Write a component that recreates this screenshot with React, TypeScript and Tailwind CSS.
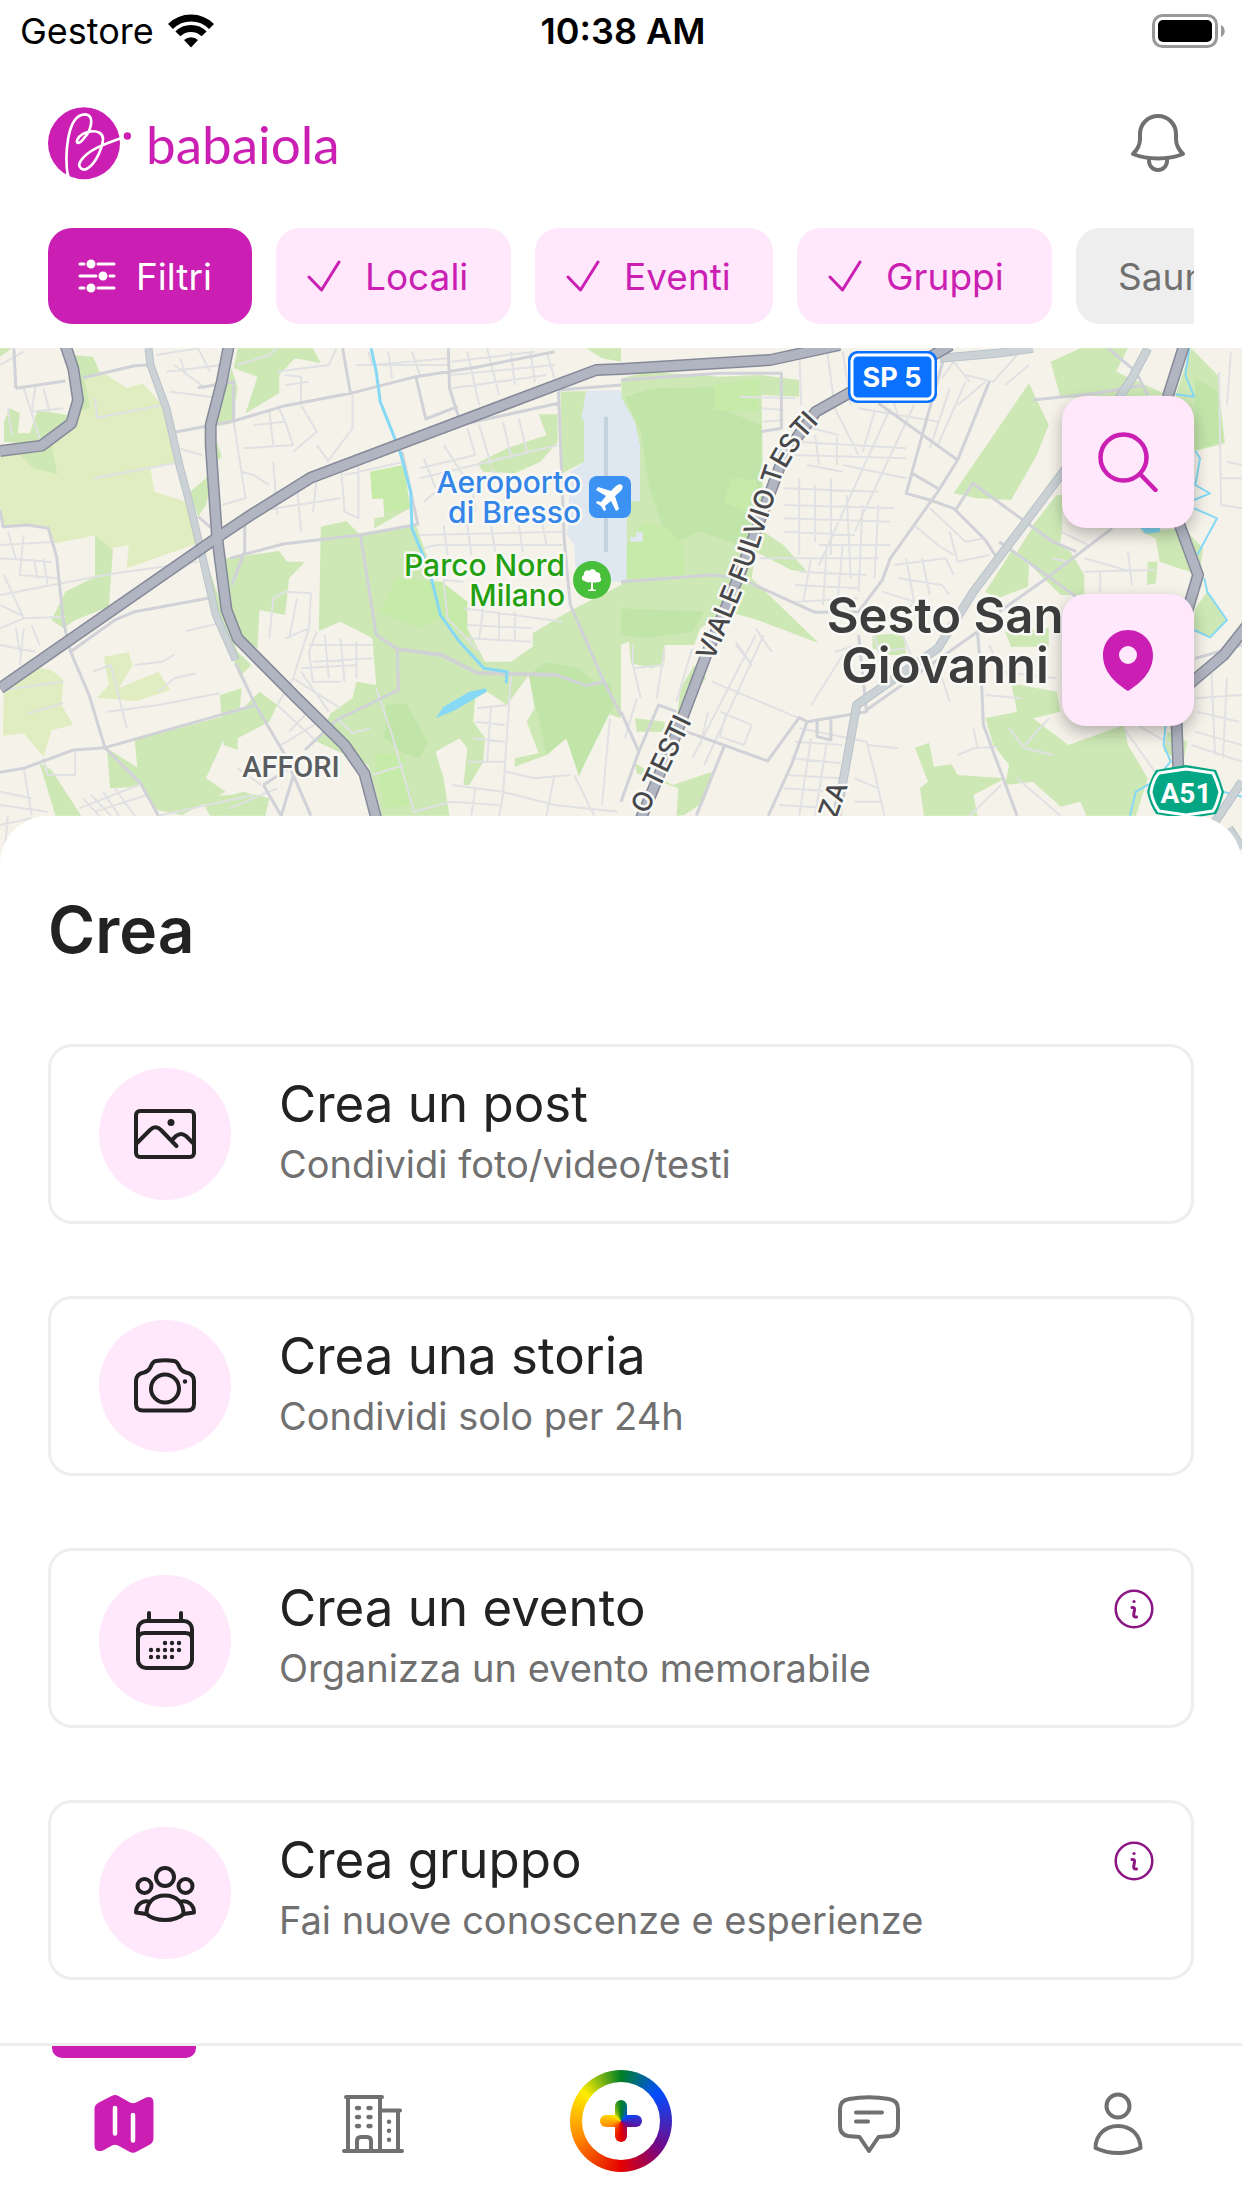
import type { ReactNode } from "react";

const RAINBOW =
  "bg-[conic-gradient(#008026_0deg,#004dff_52deg,#750787_125deg,#e40000_180deg,#ff8c00_250deg,#ffed00_308deg,#008026_360deg)]";

function StatusBar() {
  return (
    <div className="grid h-[62px] grid-cols-3 items-center pr-4 pl-5 text-black">
      <div className="flex items-center gap-3.5 text-[36px] leading-none">
        <span>Gestore</span>
        <svg width="46" height="34" viewBox="0 0 46 34" fill="none" stroke="#000" strokeWidth="7" aria-label="Wi-Fi">
          <path d="M2.5 12.5a29 29 0 0 1 41 0" />
          <path d="M9.9 19.9a18.5 18.5 0 0 1 26.2 0" />
          <path d="M23 33.5 16 26a10 10 0 0 1 14 0Z" fill="#000" stroke="none" />
        </svg>
      </div>
      <time className="text-center text-[36px] leading-none font-semibold">10:38 AM</time>
      <svg className="justify-self-end" width="74" height="34" viewBox="0 0 74 34" aria-label="Batteria carica">
        <rect x="1.5" y="1.5" width="63" height="31" rx="9" fill="none" stroke="#999" strokeWidth="3" />
        <rect x="6" y="6" width="54" height="22" rx="5" fill="#000" />
        <path d="M69 11c5 2 5 10 0 12Z" fill="#999" />
      </svg>
    </div>
  );
}

function Logo() {
  return (
    <a href="#home" className="flex items-center gap-3.5 text-[#ca1fb2]">
      <svg width="84" height="73" viewBox="24 38 252 219" fill="none" aria-hidden="true">
        <circle cx="132" cy="147" r="108" fill="#ca1fb2" />
        <g stroke="#fff" strokeWidth="8" strokeLinecap="round" strokeLinejoin="round">
          <path d="M84 250C74 190 78 60 136 60C168 64 150 112 134 129C120 150 106 150 112 136C124 108 188 98 189 134C187 162 168 204 146 220C128 234 110 218 122 200C142 168 190 150 245 131" />
          <path d="M84 240l2 16" />
        </g>
        <circle cx="262" cy="125" r="11" fill="#ca1fb2" />
      </svg>
      <span className="text-[53px] leading-none [font-family:Lato,sans-serif]">babaiola</span>
    </a>
  );
}

function BellIcon() {
  return (
    <svg width="60" height="64" viewBox="0 0 60 64" fill="none" stroke="#707070" strokeWidth="4" strokeLinejoin="round">
      <path d="M30 5C20 5 12 13 12 23V28C12 33 9 39 5 43C20 49 40 49 55 43C51 39 48 33 48 28V23C48 13 40 5 30 5Z" />
      <path d="M21 48v2a9 9 0 0 0 18 0v-2" />
    </svg>
  );
}

function Check() {
  return (
    <svg width="34" height="34" viewBox="0 0 34 34" fill="none" stroke="currentColor" strokeWidth="3" strokeLinecap="round" strokeLinejoin="round">
      <path d="M2 18 14.500 31 32 3" />
    </svg>
  );
}

const chips = [
  { label: "Locali", width: "w-[235px]" },
  { label: "Eventi", width: "w-[238px]" },
  { label: "Gruppi", width: "w-[255px]" },
];

function Filters() {
  return (
    <div className="mx-12 mt-12 mb-6 flex gap-6 overflow-hidden text-[37px] leading-none">
      <button type="button" className="flex h-24 w-[204px] shrink-0 items-center gap-5 rounded-3xl bg-[#ca1fb2] pl-[30px] text-white">
        <svg width="38" height="36" viewBox="-1 -1 38 36" fill="#fff" stroke="#fff" strokeWidth="3" strokeLinecap="round">
          <path d="M1 5h4M19 5h16M1 17h16M31 17h4M1 29h4M19 29h16" />
          <circle cx="12" cy="5" r="3" />
          <circle cx="24" cy="17" r="3" />
          <circle cx="12" cy="29" r="3" />
        </svg>
        Filtri
      </button>
      {chips.map((c) => (
        <button
          key={c.label}
          type="button"
          aria-pressed="true"
          className={`flex h-24 shrink-0 items-center gap-6 rounded-3xl bg-[#ffe7fc] pl-[31px] text-[#ca1fb2] ${c.width}`}
        >
          <Check />
          {c.label}
        </button>
      ))}
      <button type="button" aria-pressed="false" className="h-24 shrink-0 rounded-3xl bg-[#eee] px-[42px] text-[#707070]">
        Saune
      </button>
    </div>
  );
}

const LEFT_YELLOW = [
  "M180 90L270 90L320 130L360 115L410 180L440 290L440 355L380 370L390 440L470 470L500 595L320 670L325 600L255 615L245 570L140 595L120 550L70 540L8 545L0 480L0 335L110 315L190 240Z",
  "M262 935L325 922L335 960L300 1030L400 980L430 1035L345 1068L245 1058L275 1020Z",
  "M10 1005L100 970L130 975L160 1005L155 1080L185 1140L130 1155L110 1235L60 1165L8 1172Z",
];

const LEFT_GREEN = [
  "M185 30L235 35L255 90L212 100L228 190L205 195Z",
  "M25 190L50 205L45 265L75 265L95 195L170 210L190 240L110 300L10 290L10 230Z",
  "M50 330L130 300L145 388L85 370Z",
  "M600 10L790 10L810 55L745 40L705 90L705 145L620 205L650 95L590 70Z",
  "M585 70L600 130L585 235L540 245Z",
  "M545 280L560 335L545 350L520 480L500 515L480 440L520 400Z",
  "M240 570L285 615L275 785L190 825L160 850L130 825L165 740L240 695Z",
  "M570 640L705 618L725 650L770 650L730 700L720 810L655 795L650 910L600 880L580 780Z",
  "M530 680L600 920L635 960L605 995L545 800Z",
  "M810 545L875 528L905 565L1050 540L1080 640L1110 810L1180 850L1225 950L1290 950L1345 905L1345 865L1435 800L1568 720L1568 1120L1520 1100L1462 1295L1430 1180L1380 1230L1300 1265L1300 1240L1360 1225L1330 1130L1350 1090L1335 990L1280 1080L1230 1040L1200 1060L1195 1130L1225 1180L1220 1250L1185 1320L1170 1320L1180 1210L1160 1180L1100 1220L1120 1300L1135 1412L965 1412L930 1260L800 1190L835 1105L890 1060L900 1010L950 1020L940 880L860 830L805 858Z",
  "M935 380L1020 360L1035 490L945 550L945 520L970 515L968 460L940 462Z",
  "M1415 140L1480 138L1475 230L1475 350L1420 385Z",
  "M1360 208L1408 208L1408 290L1365 350L1300 385L1220 380L1205 355L1280 310L1380 270Z",
  "M340 1185L560 1115L570 1170L520 1300L570 1340L460 1410L395 1395L350 1310Z",
  "M555 1050L610 1030L605 1100L655 1040L700 1080L680 1130L600 1180L600 1215L565 1200Z",
  "M270 1210L350 1270L350 1325L278 1330Z",
  "M100 1255L130 1275L205 1412L140 1412Z",
  "M505 1355L585 1350L615 1340L680 1360L670 1412L530 1412Z",
  "M1480 10L1568 10L1568 50L1520 40Z",
  "M0 10L30 10L0 35Z",
];

const LEFT_BRIGHT = [
  "M935 380L1020 360L1035 490L970 500L968 460L940 462Z",
  "M945 1225L1020 1230L1035 1380L970 1390Z",
  "M1000 700L1115 710L1180 770L1180 880L1110 820L1060 850L960 800Z",
];

const LEFT_DEEP = [
  "M975 1080L1025 1075L1080 1190L1060 1240L1020 1225L970 1180Z",
  "M1335 990L1380 950L1460 970L1500 1010L1540 1010L1550 1080L1462 1290L1430 1180L1380 1230Z",
];

const LEFT_ROADS = [
  "M0 1282L60 1270L185 1215L265 1208L640 1082",
  "M265 1208L225 1050L178 920L290 825L340 800L525 760",
  "M178 920L160 830L143 635L122 550L70 540L8 545L0 495",
  "M265 1208L355 1315L400 1412",
  "M440 262L590 228L720 182L885 145L1050 95L1210 65L1400 20",
  "M590 228L590 110L500 128",
  "M885 145L865 10",
  "M1050 95L1075 222L1155 185M1132 10L1135 130L1158 215",
  "M580 640L715 597L910 570L1055 538L1015 320",
  "M910 570L950 870L1003 912L1115 930L1205 984L1405 990L1480 1022L1525 1010",
  "M1003 912L1006 1035L850 1125L770 1215",
  "M1410 140L1425 590L1440 780L1525 1010L1568 1110",
  "M1410 175L1160 240M1410 135L1568 120",
  "M595 955L645 1080L715 1220L785 1412",
  "M40 130L165 108M40 130L35 10M210 98L340 62L375 60",
  "M665 1320L750 1255L710 1412L665 1320",
  "M500 515L545 560M618 540L618 620L585 720",
];

const LEFT_LANES = [
  "M410 180L245 218L240 160M440 355L238 400M500 650L275 688L0 750",
  "M60 130L100 280M90 120L80 200L160 190M110 130L125 200M0 60L60 20M20 190L30 270",
  "M0 600L140 590M20 560L40 640M60 570L50 690L150 700M0 640L130 650M10 690L60 820L0 850M60 820L165 815M85 640L95 700M110 640L120 720M0 780L60 815",
  "M0 900L90 920M40 850L50 920M60 850L50 960M80 840L100 900M5 1035L160 1010M70 1105L160 1075",
  "M270 1100L400 1080L555 1045M235 980L280 960L320 1150M400 1040L440 1000L495 985M340 960L410 950L440 930M470 858L555 835",
  "M395 30L500 10M420 80L560 60M430 140L560 160M455 40L470 90M500 10L530 80M440 60L520 130M450 310L510 330",
  "M600 60L680 30L700 10M720 90L760 95L760 170M720 120L780 110M700 80L830 60L850 10",
  "M590 230L620 460L560 480M615 310L740 300L720 230M610 380L640 390L680 420M680 200L690 300M640 240L720 230L700 180M800 300L830 350M890 150L890 250L830 345M740 320L800 260L760 180",
  "M690 350L700 510M640 500L860 460M750 420L760 560M800 400L790 500M860 350L870 500L905 520L905 365M870 390L1020 350",
  "M680 880L690 760L720 740L785 745L780 850L720 880M750 760L730 880M780 850L740 1000L700 1080",
  "M800 860L780 920L790 1010L860 1010M820 870L830 1000M860 880L870 1010M780 900L940 900M790 950L940 940M900 890L900 1000M760 970L900 960M740 1000L860 1090M760 980L830 1100M700 1080L800 1190M730 1160L770 1110M710 1200L820 1120",
  "M930 20L940 60L1130 40M980 20L990 100M1040 20L1060 90M900 60L1130 60M1140 50L1350 20M1140 90L1400 60M1180 20L1210 180M1230 10L1260 150M1290 20L1300 120M1340 20L1350 110M1140 130L1380 90M1380 20L1400 100",
  "M1070 340L1100 430M1060 370L1200 330L1180 250M1120 300L1180 410M1210 240L1240 360M1270 230L1290 330M1310 220L1330 320M1060 400L1410 300M1070 470L1100 440M1240 370L1260 400",
  "M1060 570L1420 560M1070 610L1100 600L1420 600M1120 540L1130 630M1180 540L1190 630M1240 540L1250 620M1310 540L1320 620M1370 540L1380 600M1190 400L1200 500",
  "M1170 790L1420 830M1180 840L1345 850M1180 880L1340 890M1220 790L1210 880M1260 800L1260 890M1300 800L1300 890M1120 705L1130 820L1210 920M1170 710L1120 705",
  "M1290 990L1270 1350L1260 1412M1205 1090L1280 1080M1200 1130L1275 1140M1195 1180L1275 1190M1180 1250L1275 1250M1240 1080L1230 1250M1275 1280L1350 1300L1440 1290M1140 1320L1270 1340L1400 1380L1560 1400M1140 1370L1260 1380M1200 1330L1190 1412M1400 1290L1380 1412M1450 1290L1500 1412M1540 1120L1520 1380",
  "M210 1360L250 1412M230 1350L280 1412M260 1340L300 1412M290 1330L340 1412M200 1390L350 1320M240 1400L370 1350M0 1380L120 1400M0 1340L80 1360M60 1270L80 1412M110 1240L120 1290L190 1290L190 1220M0 1440L80 1420M20 1412L10 1540",
  "M950 1030L990 1170L1045 1400L1140 1370M940 1290L1020 1260M850 1120L890 1165L935 1150M400 1412L640 1350M600 1270L660 1320M580 1390L700 1330",
];

const RIGHT_GREEN = [
  "M1 100L70 80L250 95L350 90L450 105L450 155L355 150L360 560L410 600L470 680L430 675L340 620L330 700L500 895L345 825L270 800L200 850L185 900L110 900L110 950L80 970L25 955L20 890L0 900Z",
  "M185 960L215 1000L185 1045L140 1130L150 1030Z",
  "M1030 115L1080 240L1050 330L985 465L900 460L840 445Z",
  "M1085 50L1160 10L1280 10L1250 80L1380 150L1110 160Z",
  "M1440 10L1510 95L1510 140L1525 295L1450 318L1400 150Z",
  "M1100 450L1114 450L1114 560L1100 640L1040 540Z",
  "M985 620L1030 660L1028 725L950 760L920 740Z",
  "M1040 545L1135 620L1170 690L1170 750L1110 750L1000 620Z",
  "M1310 560L1420 550L1470 610L1460 690L1360 650L1350 580Z",
  "M1330 650L1355 650L1350 715L1328 720Z",
  "M1480 740L1530 825L1490 880L1445 850L1450 790Z",
  "M635 870L715 865L720 930L680 930L635 910Z",
  "M970 860L1080 850L1080 905L985 905Z",
  "M985 1015L1100 1040L1110 1100L1040 1120L1130 1200L1270 1140L1280 1200L1330 1300L1300 1412L1175 1412L1160 1370L1110 1385L1040 1310L970 1320L980 1260L940 1200L920 1120L1000 1100Z",
  "M742 1208L778 1193L790 1265L835 1258L850 1290L970 1300L890 1350L900 1412L765 1412L755 1330L775 1310Z",
  "M35 1120L110 1130L110 1160L40 1160Z",
  "M35 1255L130 1320L230 1280L210 1370L160 1410L140 1412L145 1330L40 1285Z",
  "M1380 1160L1430 1190L1420 1250L1370 1220Z",
];

const RIGHT_DEEP = [
  "M10 155L80 130L250 125L250 190L355 240L355 560L300 600L200 560L120 600L70 420L50 260Z",
  "M1450 100L1510 140L1520 290L1450 315Z",
  "M0 790L210 800L180 860L70 880L0 870Z",
];

const RIGHT_BRIGHT = [
  "M235 120L350 100L345 200L235 195Z",
  "M280 400L340 405L355 470L330 510L260 470Z",
  "M60 530L120 550L155 600L160 690L15 700L15 600Z",
];

const RIGHT_ROADS = [
  "M0 105L250 85L405 85L405 250L355 260",
  "M0 710L230 690L300 700L490 802L600 800L660 705L680 640L800 440L850 345L930 110",
  "M650 175L850 345M820 20L770 230L720 445L780 465L840 490L920 585L955 650",
  "M720 445L735 385L800 430",
  "M845 495L888 415L1090 590L1150 620M955 590L1080 695L1200 800",
  "M955 800L1080 695L1240 550",
  "M600 870L620 1100L470 1130L450 1118L370 1248L165 1160",
  "M470 1130L430 1260L372 1412M495 1130L495 1175L530 1185L530 1115",
  "M620 1095L900 860L910 1000L915 1140L965 1300L1000 1412",
  "M0 1100L45 1220L0 1370M45 1220L95 1080L140 1100M260 1205L190 1412",
  "M1040 165L1200 145L1320 120M1230 10L1300 80L1330 150",
  "M1450 940L1568 900",
];

const RIGHT_LANES = [
  "M450 20L455 180M520 15L540 190L600 330M560 20L580 180M355 190L410 195M360 230L410 225M300 155L440 160",
  "M680 190L500 660M740 180L590 560M720 60L780 160M830 130L780 310M870 110L800 300M920 110L850 180M660 80L700 210M640 200L610 320M600 190L800 230",
  "M450 240L550 270M440 290L720 310M430 330L720 340M470 360L560 380M560 360L720 400M490 270L500 360M545 275L545 360",
  "M410 430L650 440M410 480L690 490M410 520L680 530M410 560L590 570M500 600L680 600M450 400L450 630M490 420L490 590M530 400L530 630M570 450L580 700M610 480L600 740M650 480L640 700",
  "M350 640L650 640M450 680L620 690M440 720L600 730M480 640L460 770M520 600L510 780M560 600L545 790M440 770L600 760",
  "M780 490L870 590L920 580M740 540L800 600L840 630M690 660L820 640L840 690M700 700L810 720L830 750M720 640L740 770M760 640L780 750M830 560L850 650L930 630M660 740L740 770L700 830",
  "M810 100L840 50L880 110M870 90L940 110L1000 30M970 120L1030 60M1400 170L1310 250",
  "M30 900L30 960L50 1060M110 910L90 1060M180 910L140 1070M30 970L110 960M40 1060L10 1180M230 1010L450 1120",
  "M290 890L330 960L290 900M340 850L380 920M220 1100L200 1200M250 1100L330 1140L310 1200L250 1175L265 1105M340 870L180 1240M360 870L210 1260",
  "M440 1190L560 1200M430 1240L555 1255M420 1290L550 1300M410 1330L545 1340M400 1380L530 1390M480 1180L450 1412M520 1190L490 1412M450 1150L620 1190L640 1280L665 1412",
  "M540 920L600 900M480 1080L560 930M620 1200L700 1210M590 1300L650 1330M590 1370L655 1370",
  "M640 870L650 920L720 910M660 930L690 990M710 870L740 950M800 960L830 1070M760 940L800 970M930 900L960 980L1100 1000M920 1050L1010 1060M1080 1120L1020 1200",
  "M1170 640L1290 680M1170 680L1350 675M1280 620L1290 720M1210 680L1210 740M1110 560L1180 600L1130 650L1090 640",
  "M1510 80L1515 480L1568 490M1530 350L1568 360M1515 400L1568 400M1540 20L1530 180M1450 1060L1568 1050M1455 1100L1560 1130M1490 960L1500 1230M1530 1000L1520 1240M1450 1160L1568 1200M1440 1200L1568 1250M980 1150L1020 1210L1090 1230",
  "M850 1230L890 1210L950 1205M890 1150L900 1210M960 1320L880 1412M1000 1300L1110 1412M1270 1150L1360 1300M1290 1130L1390 1200",
];

function MapView() {
  return (
    <svg
      className="block h-[516px] w-full bg-[#f5f2ea] [&_path]:[vector-effect:non-scaling-stroke]"
      viewBox="0 0 1242 516"
      preserveAspectRatio="xMidYMid slice"
      role="img"
      aria-label="Mappa di Milano nord e Sesto San Giovanni"
      fill="none"
      strokeLinejoin="round"
    >
      <g transform="translate(0 -3) scale(.39605 .33333)">
        <path d={LEFT_YELLOW.join("")} fill="#e0edc0" />
        <path d={LEFT_GREEN.join("")} fill="#cde8b5" />
        <path d={LEFT_DEEP.join("")} fill="#c1e5a9" />
        <path d={LEFT_BRIGHT.join("")} fill="#c6eaa7" />
        <path d="M1480 138L1560 135L1600 160L1617 240L1617 470L1580 500L1582 710L1455 710L1450 600L1432 570L1440 380L1475 350L1475 230L1468 220Z" fill="#dfe7f1" />
      </g>
      <g transform="translate(621 -3) scale(.39605 .33333)">
        <path d={RIGHT_GREEN.join("")} fill="#cde8b5" />
        <path d={RIGHT_DEEP.join("")} fill="#c1e5a9" />
        <path d={RIGHT_BRIGHT.join("")} fill="#c6eaa7" />
        <path d="M0 155L35 230L48 300L48 468L15 470L14 705L-10 705L-40 160Z" fill="#dfe7f1" />
        <path d="M24 575L38 575L38 562L55 562L55 590L24 590Z" fill="#dfe7f1" />
        <path d={RIGHT_LANES.join("")} stroke="#e0e1e3" strokeWidth="2" />
        <path d={RIGHT_ROADS.join("")} stroke="#d0d2d8" strokeWidth="3" />
        <path d="M1435 10L1425 90L1447 155L1400 148M1450 318L1462 340L1450 420L1487 445L1447 465M1447 490L1505 520L1455 630M1473 700L1480 740L1530 825L1487 877L1447 855M1375 1140L1370 1200L1388 1250L1345 1310L1300 1340L1285 1412M1520 1340L1568 1355" stroke="#86d9f5" strokeWidth="2" />
        <path d="M1310 548L1362 548L1360 562L1325 566Z" fill="#86d9f5" />
        <path d="M805 40L950 25L1040 10M1330 10L1290 100L1240 190L1114 385L890 740L800 910L595 1080L545 1412M1568 1310L1500 1430M1535 1450L1568 1510" stroke="#b9c3c9" strokeWidth="9" />
        <path d="M805 40L950 25L1040 10M1330 10L1290 100L1240 190L1114 385L890 740L800 910L595 1080L545 1412M1568 1310L1500 1430M1535 1450L1568 1510" stroke="#cad2d6" strokeWidth="7" />
      </g>
      <g transform="translate(0 -3) scale(.39605 .33333)">
        <path d={LEFT_LANES.join("")} stroke="#e0e1e3" strokeWidth="2" />
        <path d={LEFT_ROADS.join("")} stroke="#d0d2d8" strokeWidth="3" />
        <path d="M1003 912L1115 930L1205 984L1405 990" stroke="#d0d2d4" strokeWidth="4" />
        <path d="M1530 215V622" stroke="#c4d2de" strokeWidth="4" />
        <path d="M937 10L950 80L960 170L1010 320L1037 440L1040 550L1085 680L1112 810L1160 890L1222 970L1280 980L1278 1015" stroke="#86d9f5" strokeWidth="3" />
        <path d="M1228 1030L1185 1040L1120 1085L1100 1120L1150 1095L1228 1040Z" fill="#86d9f5" />
        <path d="M375 10L380 60L420 190L455 370L480 480L510 630L545 810L595 945" stroke="#b9c3c9" strokeWidth="8" />
        <path d="M375 10L380 60L420 190L455 370L480 480L510 630L545 810L595 945" stroke="#cad2d6" strokeWidth="6" />
        {["#858a99", "#b1b5c1"].map((color, i) => (
          <g key={color} stroke={color} strokeWidth={i === 0 ? 12 : 9}>
            <path d="M165 0L185 70L197 165L180 235L105 302L0 318" />
            <path d="M578 0L560 110L532 240L532 300L548 575L572 795L600 880L750 1060L870 1200L920 1285L950 1420" />
            <path d="M0 1030L548 578L640 505L785 398L1505 75L1568 72L1945 45L2120 0" />
            <path d="M2400 0L2350 35L2150 140L2060 200L1980 330L1870 680L1780 940L1710 1160L1615 1430" />
            <path d="M2990 0L2950 150L2935 400L3025 690L2965 930L2975 1270L2990 1420" />
            <path d="M3150 840L3090 930L3000 1020" />
          </g>
        ))}
      </g>

      <g className="[font-family:Inter,sans-serif] [paint-order:stroke]" stroke="#f8f8f4" strokeWidth="5">
        <g fontSize="30" fontWeight="500" textAnchor="end">
          <text x="581" y="145" fill="#3385e8">Aeroporto</text>
          <text x="581" y="175" fill="#3385e8">di Bresso</text>
          <text x="565" y="228" fill="#23a010">Parco Nord</text>
          <text x="565" y="258" fill="#23a010">Milano</text>
        </g>
        <text x="291" y="429" fontSize="29" fontWeight="500" textAnchor="middle" fill="#5a5d60" className="[font-family:Roboto,sans-serif]">
          AFFORI
        </text>
        <g fontSize="49" fontWeight="600" textAnchor="middle" fill="#3d3d3d">
          <text x="945" y="285">Sesto San</text>
          <text x="945" y="335">Giovanni</text>
        </g>
        <path id="viale" d="M713 314L749 228L782 127L802 93L850 40" stroke="none" />
        <path id="viale-sud" d="M637 488L692 373" stroke="none" />
        <path id="via-za" d="M836 472L854 420" stroke="none" />
        <g fontSize="27" fontWeight="500" fill="#45474a">
          <text><textPath href="#viale">VIALE FULVIO TESTI</textPath></text>
          <text textAnchor="end"><textPath href="#viale-sud" startOffset="100%">O TESTI</textPath></text>
          <text><textPath href="#via-za">ZA</textPath></text>
        </g>
      </g>

      <rect x="589" y="128" width="42" height="42" rx="8" fill="#3b92f2" />
      <path
        d="M622 137C619 135 616 138 611 143L598 139L596 142L606 148L601 154L597 153L596 155L601 158L604 163L606 162L605 158L611 153L616 163L619 161L615 148C621 143 624 140 622 137Z"
        fill="#fff"
      />
      <circle cx="592" cy="232" r="19" fill="#48bf3b" />
      <path
        d="M588 243v-1l3-1v-7c-3 1-5 0-6-1c-4 0-4-5-1-6c-1-4 4-6 5-4c2-3 7-2 7 1c4 0 5 3 4 5c3 3 0 6-3 5c-1 1-3 1-4 0v7l3 1v1Z"
        fill="#fff"
      />

      <rect x="848" y="3" width="89" height="52" rx="9" fill="#0b72ff" />
      <rect x="852" y="7" width="81" height="44" rx="6" stroke="#fff" strokeWidth="3" />
      <text x="892" y="39" textAnchor="middle" fontSize="27" fontWeight="700" fill="#fff" className="[font-family:Inter,sans-serif]">
        SP 5
      </text>
      <path d="M1186 417L1216 422Q1220 431 1224 444Q1220 459 1216 466L1186 471L1156 466Q1150 457 1147 444Q1150 431 1156 422Z" fill="#05a683" />
      <path d="M1186 421L1213 425Q1217 433 1220 444Q1217 457 1213 463L1186 467L1159 463Q1153 455 1151 444Q1153 431 1159 425Z" stroke="#fff" strokeWidth="3" />
      <text x="1186" y="455" textAnchor="middle" fontSize="28" fontWeight="700" fill="#fff" className="[font-family:Roboto,sans-serif]">
        A51
      </text>
    </svg>
  );
}

function MapButton({ label, children }: { label: string; children: ReactNode }) {
  return (
    <button
      type="button"
      aria-label={label}
      className="flex size-[132px] items-center justify-center rounded-3xl bg-[#ffe7fc] text-[#ca1fb2] shadow-[0_6px_16px_rgba(0,0,0,0.28)]"
    >
      {children}
    </button>
  );
}

function ImageIcon() {
  return (
    <>
      <rect x="3" y="9" width="58" height="46" rx="4" />
      <path d="M3 42L17 28Q22.500 22.500 28 28L43.500 44M39 38L43 34Q48 30 53 34L61 42" />
      <circle cx="38" cy="20.500" r="3.500" fill="#222" stroke="none" />
    </>
  );
}

function CameraIcon() {
  return (
    <>
      <path d="M23 7Q32 5.500 41 7Q44 7.500 45.500 11L47 14Q49 17.500 53 18.500Q61 20 61 27V50Q61 56.500 54 56.500H10Q3 56.500 3 50V27Q3 20 11 18.500Q15 17.500 17 14L18.500 11Q20 7.500 23 7Z" />
      <circle cx="32" cy="34.500" r="14" />
      <circle cx="52" cy="27.500" r="2.200" fill="#222" stroke="none" />
    </>
  );
}

const calendarDots: [number, number][] = [
  [32, 34], [39, 34], [46, 34],
  [18, 41], [25, 41], [32, 41], [39, 41], [46, 41],
  [18, 48], [25, 48], [32, 48], [39, 48],
];

function CalendarIcon() {
  return (
    <>
      <path d="M16 4v8M48 4v8" />
      <rect x="5" y="12" width="54" height="47" rx="8" />
      <path d="M5 32V30Q5 24 12 24H52Q59 24 59 30V32" />
      {calendarDots.map(([x, y]) => (
        <circle key={`${x}-${y}`} cx={x} cy={y} r="2.200" fill="#222" stroke="none" />
      ))}
    </>
  );
}

function GroupIcon() {
  return (
    <>
      <circle cx="32" cy="16" r="9" />
      <circle cx="11.500" cy="25" r="7" />
      <circle cx="52.500" cy="25" r="7" />
      <path d="M13.500 53C13.500 42 20 34.500 32 34.500C44 34.500 50.500 42 50.500 53C42 61 22 61 13.500 53Z" />
      <path d="M17 41C9 38.500 3 44 3 51.500L13.500 53M47 41C55 38.500 61 44 61 51.500L50.500 53" />
    </>
  );
}

const actions = [
  { title: "Crea un post", text: "Condividi foto/video/testi", Icon: ImageIcon, info: false },
  { title: "Crea una storia", text: "Condividi solo per 24h", Icon: CameraIcon, info: false },
  { title: "Crea un evento", text: "Organizza un evento memorabile", Icon: CalendarIcon, info: true },
  { title: "Crea gruppo", text: "Fai nuove conoscenze e esperienze", Icon: GroupIcon, info: true },
];

function CreateSheet() {
  return (
    <section className="relative -mt-12 flex-1 rounded-t-[48px] bg-white px-12 pt-[78px] pb-[63px]">
      <h1 className="text-[64px] leading-[72px] font-semibold text-[#222]">Crea</h1>
      <ul className="mt-[78px] flex flex-col gap-[72px]">
        {actions.map(({ title, text, Icon, info }) => (
          <li key={title} className="flex items-start rounded-3xl border-[3px] border-[#eee]">
            <button type="button" className="flex h-[174px] flex-1 items-center gap-12 py-[18px] pl-12 text-left">
              <span className={`flex size-[132px] shrink-0 items-center justify-center rounded-full bg-[#ffe7fc] ${info ? "self-end" : ""}`}>
                <svg width="64" height="64" viewBox="0 0 64 64" fill="none" stroke="#222" strokeWidth="4" strokeLinecap="round" strokeLinejoin="round">
                  <Icon />
                </svg>
              </span>
              <span className="flex flex-col leading-[60px]">
                <span className="text-[51px] text-[#222]">{title}</span>
                <span className="text-[38px] text-[#707070]">{text}</span>
              </span>
            </button>
            {info && (
              <button type="button" aria-label={`Informazioni: ${title}`} className="mt-[38px] mr-[37px]">
                <svg width="40" height="40" viewBox="0 0 40 40" fill="none" stroke="#8b1583" strokeWidth="2.500" strokeLinecap="round">
                  <circle cx="20" cy="20" r="18.300" />
                  <circle cx="20" cy="12.500" r="1.600" fill="#8b1583" stroke="none" />
                  <path d="M18 18.500q3-.5 2.500 2.500l-.8 4.500q-.3 3 2.800 2.500" strokeWidth="3" />
                </svg>
              </button>
            )}
          </li>
        ))}
      </ul>
    </section>
  );
}

function BottomNav() {
  const item = "relative flex items-center justify-center pb-1.5";
  return (
    <nav className="grid h-[165px] grid-cols-5 border-t-[3px] border-[#eee] bg-white">
      <a href="#mappa" aria-label="Mappa" aria-current="page" className={item}>
        <span className="absolute top-0 h-3 w-36 rounded-b-[10px] bg-[#ca1fb2]" />
        <svg width="60" height="60" viewBox="0 0 60 60" fill="#ca1fb2">
          <path d="M17.500 2Q21 0 24.500 2L36 8.500Q39 10 42 8.500L52 3.500Q59.500 1 59.500 9V44Q59.500 48 56 50.500L43 57.500Q39 60 35 57.500L24 51.500Q21 50 18 51.500L9 56.500Q.5 59 .5 51V15Q.5 11 4 9Z" />
          <path d="M21 14v25.500M39 21v25.500" stroke="#fff" strokeWidth="4.500" strokeLinecap="round" />
        </svg>
      </a>
      <a href="#locali" aria-label="Locali" className={item}>
        <svg width="62" height="60" viewBox="0 0 62 60" fill="none" stroke="#707070" strokeWidth="4" strokeLinecap="round">
          <path d="M4 3h36M6 3v54M38 3v54M40 16.500h18M56 16.500v40.500M2 57h58M15 57V47q0-4 4-4h6q4 0 4 4v10" />
          <g fill="#707070" stroke="none">
            {[14, 23, 32].map((y) => (
              <g key={y}>
                <ellipse cx="16" cy={y} rx="3.200" ry="2.300" />
                <ellipse cx="27.500" cy={y} rx="3.200" ry="2.300" />
                <circle cx="47" cy={y + 13.7} r="2.200" />
              </g>
            ))}
          </g>
        </svg>
      </a>
      <div className="flex items-center justify-center pb-3">
        <button type="button" aria-label="Crea" className={`grid size-[102px] place-items-center rounded-full p-3 ${RAINBOW}`}>
          <span className="grid size-full place-items-center rounded-full bg-white">
            <span className={`col-start-1 row-start-1 h-[42px] w-3 rounded-full ${RAINBOW}`} />
            <span className={`col-start-1 row-start-1 h-3 w-[42px] rounded-full ${RAINBOW}`} />
          </span>
        </button>
      </div>
      <a href="#messaggi" aria-label="Messaggi" className={item}>
        <svg width="62" height="60" viewBox="0 0 62 60" fill="none" stroke="#707070" strokeWidth="4" strokeLinecap="round" strokeLinejoin="round">
          <path d="M11 5Q31 1.500 51 5Q60 6.500 60 15V32Q60 40.500 52 42L40.500 43L31 57L21.500 43L10 42Q2 40.500 2 32V15Q2 6.500 11 5Z" />
          <path d="M18 18.500h26M18 27.500h12" />
        </svg>
      </a>
      <a href="#profilo" aria-label="Profilo" className={item}>
        <svg width="60" height="64" viewBox="0 -2 60 64" fill="none" stroke="#707070" strokeWidth="4" strokeLinejoin="round">
          <circle cx="30" cy="12" r="11.500" />
          <path d="M7.500 54C7.500 41 17 32 30 32C43 32 52.500 41 52.500 54C38 60.500 22 60.500 7.500 54Z" />
        </svg>
      </a>
    </nav>
  );
}

export default function App() {
  return (
    <div className="flex min-h-screen flex-col bg-white [font-family:Inter,sans-serif]">
      <StatusBar />
      <header className="mt-11 flex h-[74px] items-center justify-between px-12">
        <Logo />
        <button type="button" aria-label="Notifiche" className="mr-1.5">
          <BellIcon />
        </button>
      </header>
      <Filters />
      <div className="relative">
        <MapView />
        <div className="absolute top-12 right-12 flex flex-col gap-[66px]">
          <MapButton label="Cerca">
            <svg width="60" height="60" viewBox="0 0 60 60" fill="none" stroke="currentColor" strokeWidth="4.500" strokeLinecap="round">
              <circle cx="25.500" cy="25.500" r="23" />
              <path d="M42.500 42.500 57.500 58" />
            </svg>
          </MapButton>
          <MapButton label="Posizione">
            <svg width="50" height="61" viewBox="0 0 50 61" fill="currentColor" fillRule="evenodd">
              <path d="M25 0C11 0 0 11 0 25C0 43 14 54 25 61C36 54 50 43 50 25C50 11 39 0 25 0ZM25 16a9 9 0 1 1 0 18a9 9 0 1 1 0-18Z" />
            </svg>
          </MapButton>
        </div>
      </div>
      <CreateSheet />
      <BottomNav />
    </div>
  );
}
